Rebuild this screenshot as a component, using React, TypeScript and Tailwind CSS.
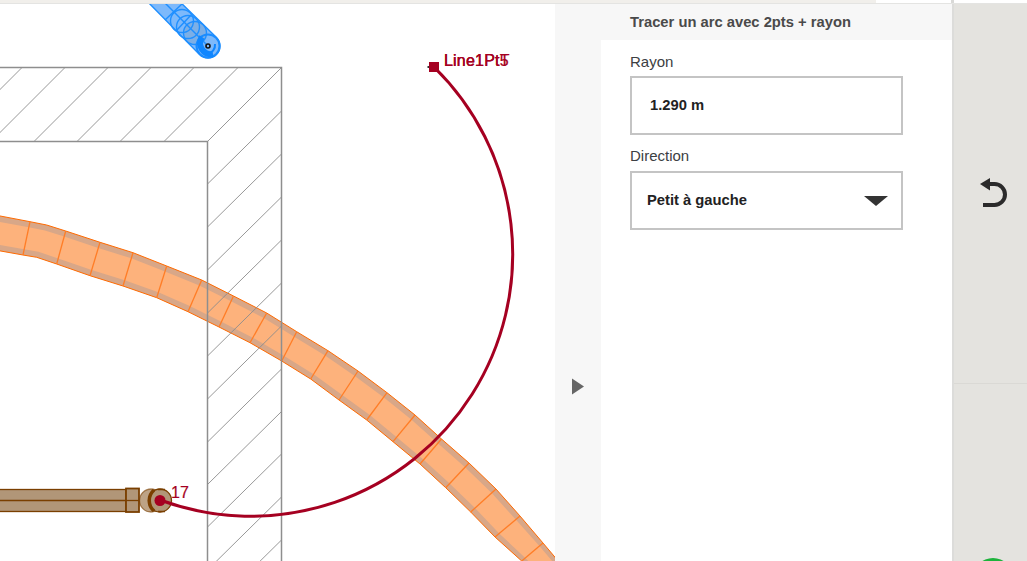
const RED = "#a50021";

// pipe outline, sampled as [upper x, upper y, lower x, lower y]
const orange = [
  [-5, 215, -5, 250],
  [30, 221.7, 23, 255],
  [46.7, 225, 36.7, 257.3],
  [65.7, 231, 56.7, 264],
  [100, 242.3, 90, 275.7],
  [133, 252.7, 123, 286],
  [166.7, 266, 156.7, 297.7],
  [201.7, 280, 188, 311.7],
  [233.5, 296, 219, 327],
  [266.7, 313, 250, 342.7],
  [296.7, 331.7, 281.7, 361],
  [328, 350.7, 310.7, 379],
  [358, 371, 339, 400],
  [387, 392.7, 366.7, 420],
  [415, 415, 393, 441.7],
  [441.5, 439, 420, 464],
  [469, 463, 445.7, 487.7],
  [496, 489, 470.7, 512],
  [520, 516, 495, 537],
  [543, 543, 521.7, 561],
  [570, 575, 535, 575],
];

const lerp = (a: number, b: number, t: number) => a + (b - a) * t;

function band(t0: number, t1: number) {
  const top = orange.map((p) => `${lerp(p[0], p[2], t0)},${lerp(p[1], p[3], t0)}`);
  const bottom = orange.map((p) => `${lerp(p[0], p[2], t1)},${lerp(p[1], p[3], t1)}`).reverse();
  return [...top, ...bottom].join(" ");
}

const topHatch = [22, 65, 108, 151, 194, 238, 281.5];
const sideHatch = [111, 154, 197, 240, 283, 326, 369, 411.5, 454, 497, 540];

function Plan() {
  return (
    <svg width="555" height="557" viewBox="0 4 555 557" className="block">
      {/* orange pipe */}
      <polygon points={band(0, 1)} fill="#d8a788" stroke="#ff6a00" strokeWidth="1" />
      <polygon points={band(0.17, 0.83)} fill="#fdb27c" />
      <g stroke="#ff7d26" strokeWidth="1.3">
        {orange.slice(1, -1).map((p, i) =>
          i === 1 ? null : <line key={i} x1={p[0]} y1={p[1]} x2={p[2]} y2={p[3]} />
        )}
      </g>

      {/* wall, it shows through the pipe */}
      <g stroke="#8c8c8c" strokeWidth="0.9" fill="none">
        {topHatch.map((x) => (
          <line key={x} x1={x} y1="67.5" x2={x - 73.5} y2="141" />
        ))}
        {sideHatch.map((y) => (
          <line key={y} x1="281.5" y1={y} x2="207.5" y2={y + 73} />
        ))}
      </g>
      <path d="M0 67.5H281.5V561M0 141.5H207.5V561" fill="none" stroke="#8e8e8e" strokeWidth="1.5" />

      {/* blue pipe */}
      <g fill="none" stroke="#1f8fff" strokeWidth="1.4">
        <path d="M143 -3L199.5 54.5A12 12 0 0 0 216.5 37.5L175 -3Z" fill="#7db9fb" />
        <circle cx="195" cy="33" r="11.5" fill="#7ba8d8" fillOpacity="0.6" />
        <circle cx="188" cy="27" r="11.5" />
        <circle cx="182" cy="21" r="11.5" />
        <path d="M159 -3L208 46" />
        <path d="M165 20L183 3" />
        <path d="M176 31L191 15" />
        <circle cx="208" cy="46" r="11.5" stroke="#1a8cff" strokeWidth="2" />
        <path d="M202 37A11 11 0 0 0 213 54" stroke="#0f86ff" strokeWidth="6" />
        <path d="M207 54A9 9 0 0 0 215 44" stroke="#0f86ff" strokeWidth="2" />
        <circle cx="208" cy="46" r="2" fill="#7db9fb" stroke="#111" strokeWidth="1.6" />
      </g>

      {/* brown pipe */}
      <g stroke="#7a3f00" fill="#b19678" strokeWidth="1.3">
        <rect x="-3" y="489.5" width="129" height="22" />
        <line x1="-3" y1="500.5" x2="126" y2="500.5" />
        <circle cx="151" cy="500.5" r="11.5" fill="#bda386" strokeOpacity="0.6" />
        <circle cx="160" cy="500.5" r="11.5" />
        <rect x="126" y="488.5" width="13" height="23.5" strokeWidth="1.8" />
        <line x1="126" y1="500.5" x2="139" y2="500.5" />
        <path d="M154 490A14 14 0 0 0 154 511" fill="none" strokeWidth="3.5" />
        <path d="M158 489.5H165M158 511.5H165" strokeWidth="1.5" />
      </g>

      {/* construction arc */}
      <path d="M434 67A262 262 0 0 1 160 500" fill="none" stroke={RED} strokeWidth="3" />
      <rect x="429" y="62" width="10" height="10" fill={RED} />
      <line x1="427.5" y1="67" x2="429" y2="67" stroke="#333" strokeWidth="2" />
      <circle cx="160" cy="500.5" r="5.5" fill={RED} />
      <g fill={RED} stroke={RED} strokeWidth="0.2" fontFamily="'Liberation Sans', Arial, sans-serif" fontSize="16">
        <text x="444" y="66" letterSpacing="0.2">Line1Pt5</text>
        <text x="444" y="66" letterSpacing="0.2">Line1PtT</text>
        <text x="171" y="498">17</text>
      </g>
    </svg>
  );
}

function Field({ label, boxClass, children }: { label: string; boxClass: string; children: React.ReactNode }) {
  return (
    <div className="flex flex-col">
      <label className="text-[15px] leading-[16px] text-[#3c4043]">{label}</label>
      <div
        className={`${boxClass} flex h-[59px] w-[273px] items-center border-2 border-[#c4c4c4] bg-white text-[14.75px] font-bold text-[#222]`}
      >
        {children}
      </div>
    </div>
  );
}

export default function App() {
  return (
    <div className="flex h-[561px] w-[1027px] flex-col overflow-hidden bg-white font-['Liberation_Sans',Arial,sans-serif]">
      <div className="flex h-[4px] shrink-0 border-b border-[#e4e4e2]">
        <div className="w-[876px] bg-[#f1efeb]" />
        <div className="w-[75px] bg-white" />
        <div className="w-[3px] bg-[#d9d9d7]" />
        <div className="flex-1 bg-white" />
      </div>
      <div className="flex min-h-0 flex-1">
        <div className="w-[555px] shrink-0 overflow-hidden">
          <Plan />
        </div>
        <div className="flex w-[46px] shrink-0 items-center justify-center bg-[#f7f7f7]">
          <div className="h-0 w-0 translate-y-[103.5px] border-y-[8px] border-l-[12px] border-y-transparent border-l-[#666]" />
        </div>
        <div className="flex w-[351px] shrink-0 flex-col">
          <div className="flex h-[36px] shrink-0 items-center bg-[#f7f7f7] pl-[29px] pt-[1px] text-[14.75px] font-bold text-[#4a4a4a]">
            Tracer un arc avec 2pts + rayon
          </div>
          <div className="flex flex-col gap-[13px] pl-[29px] pt-[14px]">
            <Field label="Rayon" boxClass="mt-[6px]">
              <span className="pl-[18px]">1.290 m</span>
            </Field>
            <Field label="Direction" boxClass="mt-[7px]">
              <span className="pl-[15px]">Petit à gauche</span>
              <div className="ml-auto mr-[13px] h-0 w-0 border-x-[12px] border-t-[10px] border-x-transparent border-t-[#333]" />
            </Field>
          </div>
        </div>
        <div className="flex w-[75px] shrink-0 flex-col border-l-2 border-[#dcdcda] bg-[#e4e3df]">
          <div className="flex h-[380px] shrink-0 items-center justify-center border-b border-[#dad9d5] pb-[1px] pl-[5px]">
            <svg width="30" height="34" viewBox="0 0 30 34">
              <path d="M2 8L12 2V14.5Z" fill="#2b2b2b" />
              <path d="M10 8H16.5A10.5 10.5 0 0 1 16.5 29H5" fill="none" stroke="#2b2b2b" strokeWidth="4" />
            </svg>
          </div>
          <div className="flex justify-center pl-[5px] pt-[174px]">
            <div className="h-[40px] w-[40px] shrink-0 rounded-full bg-[#1db33c]" />
          </div>
        </div>
      </div>
    </div>
  );
}
